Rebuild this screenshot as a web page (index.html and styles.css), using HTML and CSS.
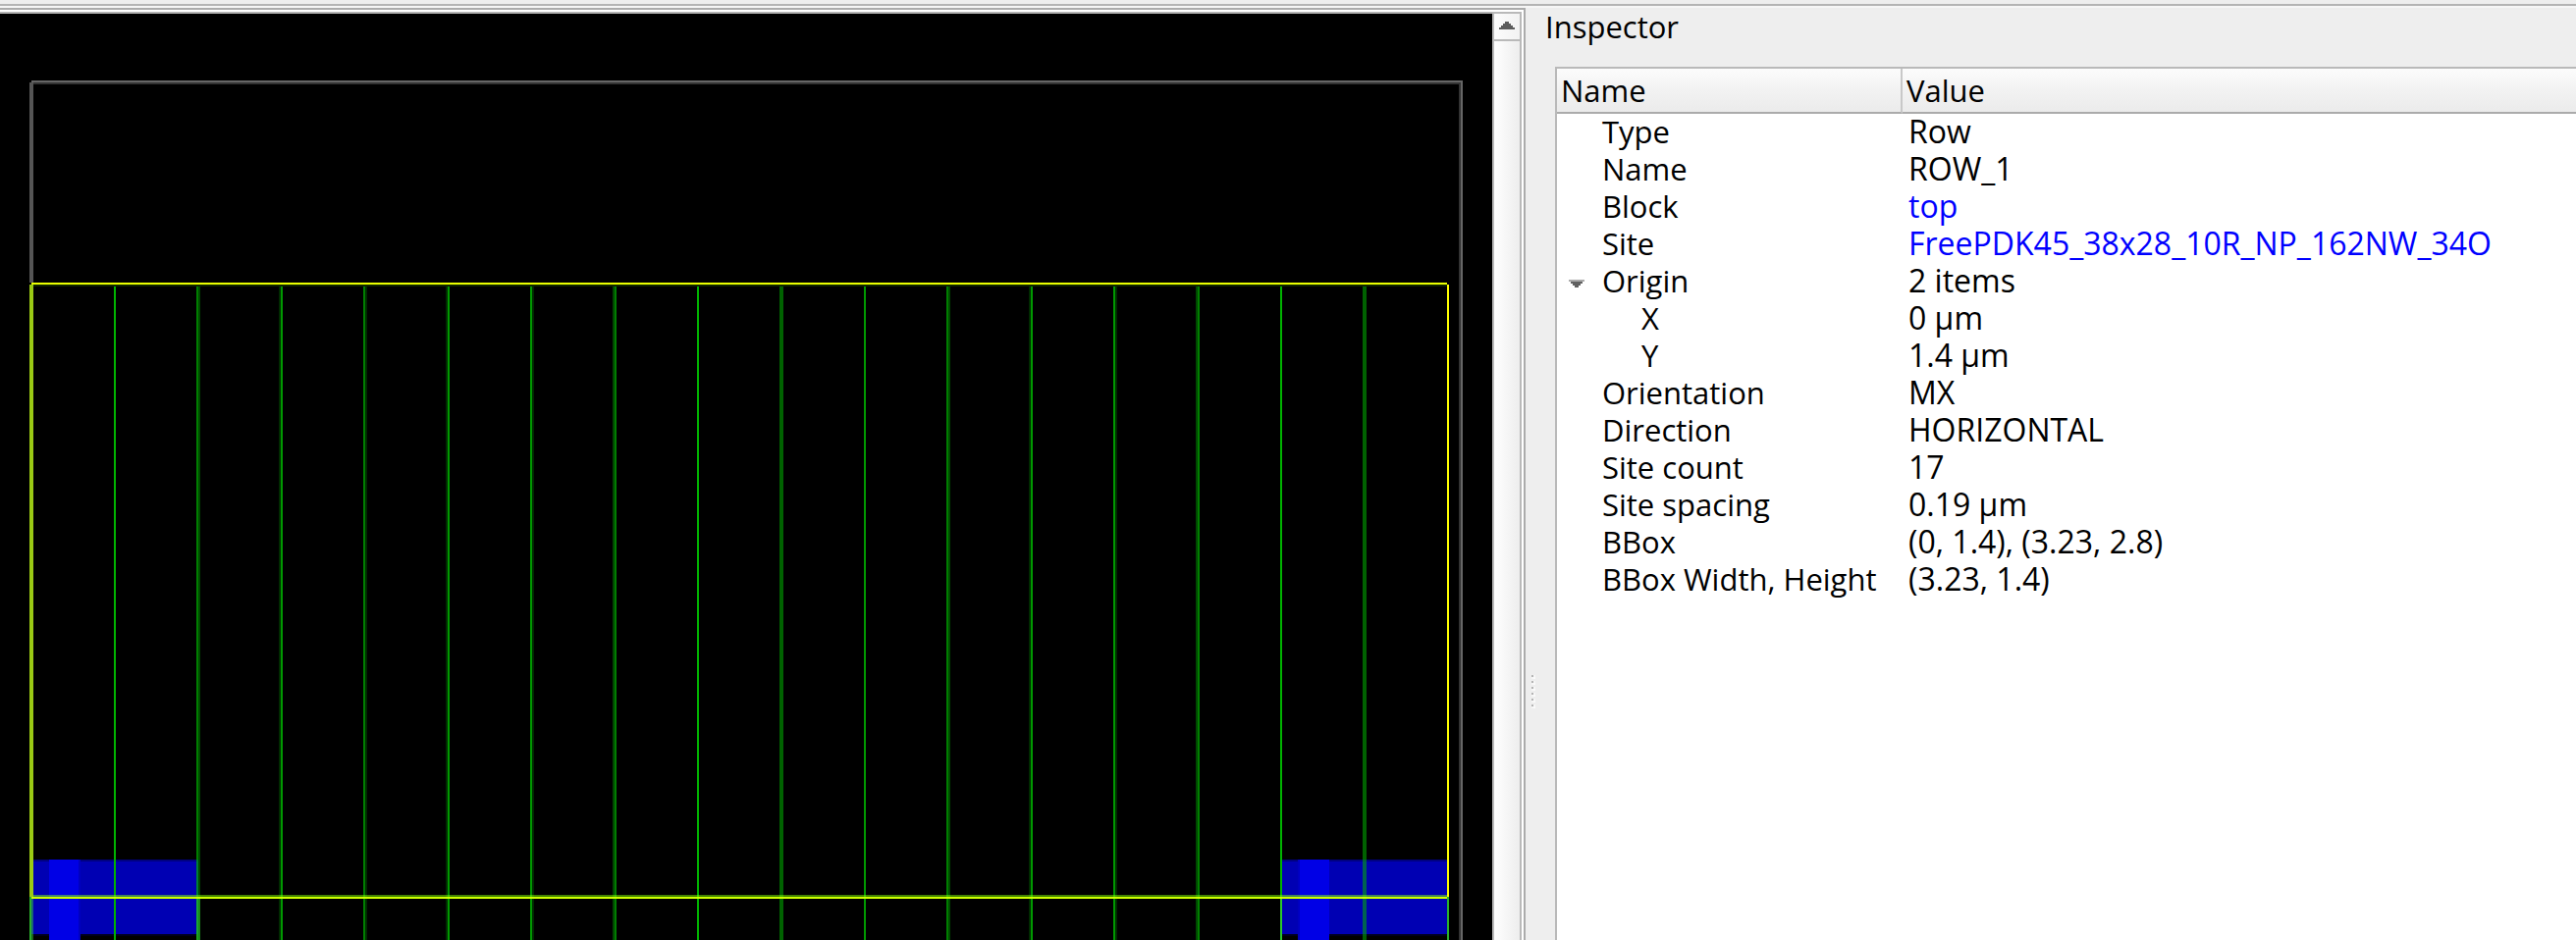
FILE: index.html
```
<!DOCTYPE html>
<html lang="en">
<head>
<meta charset="utf-8">
<title>Layout viewer</title>
<link rel="stylesheet" href="styles.css">
</head>
<body>
<div class="toolbar-edge"></div>
<main class="workspace">
  <section class="viewer" aria-label="Layout">
    <div class="canvas">
      <svg class="layout" viewBox="0 0 760 472" shape-rendering="crispEdges" role="img" aria-label="Row placement">
        <g transform="translate(0 -7)">
          <!-- die outline -->
          <path fill="#666" d="M16 41h728v1H16z"/>
          <path fill="#333" d="M16 42h727v1H16z"/>
          <path fill="#555" d="M15 42h2v102h-2z"/>
          <path fill="#333" d="M743 42h1v437h-1z"/>
          <path fill="#666" d="M744 41h1v438h-1z"/>
          <!-- metal shapes -->
          <path fill="#000080" d="M17 438h84v1H17zM653 438h84v1h-84z"/>
          <path fill="#0000b3" d="M16 439h85v37H16zM653 439h84v37h-84z"/>
          <path fill="#00001c" d="M17 476h84v1H17zM653 476h84v1h-84z"/>
          <path fill="#0000e6" d="M25 438h15v41H25zM662 438h15v41h-15z"/>
          <path fill="#0000c0" d="M40 438h1v41h-1zM661 438h1v41h-1z"/>
          <!-- site grid -->
          <g fill="#00b300">
            <path d="M58 145h1v334h-1zM355 145h1v334h-1zM652 145h1v334h-1z"/>
            <path opacity=".85" d="M143 145h1v334h-1zM228 145h1v334h-1zM270 145h1v334h-1zM440 145h1v334h-1zM525 145h1v334h-1zM567 145h1v334h-1z"/>
            <path opacity=".7" d="M100 145h1v334h-1zM185 145h1v334h-1zM313 145h1v334h-1zM482 145h1v334h-1zM610 145h1v334h-1z"/>
            <path opacity=".55" d="M397 145h1v334h-1zM398 145h1v334h-1zM695 145h1v334h-1zM694 145h1v334h-1z"/>
            <path opacity=".4" d="M101 145h1v334h-1zM312 145h1v334h-1zM483 145h1v334h-1zM609 145h1v334h-1z"/>
            <path opacity=".24" d="M142 145h1v334h-1zM186 145h1v334h-1zM227 145h1v334h-1zM271 145h1v334h-1zM524 145h1v334h-1zM568 145h1v334h-1z"/>
          </g>
          <path fill="#33cc33" opacity=".85" d="M15 457h1v22h-1zM652 457h1v22h-1zM737 457h1v22h-1z"/>
          <path fill="#33cc33" opacity=".5" d="M16 457h1v22h-1zM100 457h2v22h-2z"/>
          <!-- selected row -->
          <path fill="#9aca14" d="M15 145h2v312h-2z"/>
          <path fill="#0f2400" d="M17 145h720v1H17z"/>
          <path fill="#eaff00" d="M16 144h721v1H16z"/>
          <path fill="#ffff00" d="M737 145h1v312h-1z"/>
          <path fill="#80ff00" opacity=".5" d="M17 456h720v1H17z"/>
          <path fill="#ccff00" d="M16 457h721v1H16z"/>
        </g>
      </svg>
    </div>
    <div class="scrollbar">
      <button class="scroll-up" type="button" aria-label="Scroll up">
        <svg class="scroll-arrow" viewBox="0 0 16 8"><path fill="#5c5c5c" d="M0 8V6h2V4h2V2h2V0h4v2h2v2h2v2h2v2z"/></svg>
      </button>
    </div>
  </section>
  <section class="dock">
    <div class="grip"><i></i><i></i><i></i><i></i><i></i><i></i></div>
    <div class="inspector">
      <h1 class="title">Inspector</h1>
      <div class="tree">
        <table class="properties">
          <thead><tr><th class="name-col">Name</th><th>Value</th></tr></thead>
          <tbody>
            <tr><td>Type</td><td>Row</td></tr>
            <tr><td>Name</td><td>ROW_1</td></tr>
            <tr><td>Block</td><td><a href="#top">top</a></td></tr>
            <tr><td>Site</td><td><a href="#site">FreePDK45_38x28_10R_NP_162NW_34O</a></td></tr>
            <tr><td class="branch"><button class="toggle" type="button" aria-expanded="true" aria-label="Collapse Origin"><svg class="toggle-arrow" viewBox="0 0 16 10"><path fill="#aaa" d="M0 0h16v2H0z"/><path fill="#606060" d="M2 2h12v2h-2v2h-2v2H6V6H4V4H2z"/></svg></button>Origin</td><td>2 items</td></tr>
            <tr><td class="child">X</td><td>0 µm</td></tr>
            <tr><td class="child">Y</td><td>1.4 µm</td></tr>
            <tr><td>Orientation</td><td>MX</td></tr>
            <tr><td>Direction</td><td>HORIZONTAL</td></tr>
            <tr><td>Site count</td><td>17</td></tr>
            <tr><td>Site spacing</td><td>0.19 µm</td></tr>
            <tr><td>BBox</td><td>(0, 1.4), (3.23, 2.8)</td></tr>
            <tr><td>BBox Width, Height</td><td>(3.23, 1.4)</td></tr>
          </tbody>
        </table>
      </div>
    </div>
  </section>
</main>
</body>
</html>
```
FILE: styles.css
```
* { box-sizing: border-box; }

body {
  margin: 0;
  height: 100vh;
  display: flex;
  flex-direction: column;
  overflow: hidden;
  background: #eeeeee;
  color: #000;
  font: 31px/38px "Open Sans", "Noto Sans", sans-serif;
}

button {
  margin: 0;
  padding: 0;
  border: 0;
  background: none;
}

.toolbar-edge {
  flex: none;
  height: 8px;
  border-top: 4px solid #eeeeee;
  border-bottom: 2px solid #f6f6f6;
  background: #b4b4b4;
}

.workspace {
  flex: 1;
  min-height: 0;
  display: grid;
  grid-template-columns: minmax(0, 777fr) minmax(0, 535fr);
  grid-template-rows: minmax(0, 1fr);
}

.viewer {
  display: flex;
  overflow: hidden;
  border-top: 2px solid #ababab;
  border-right: 2px solid #ababab;
  background: #fff;
  padding: 2px 2px 0 0;
}

.canvas {
  flex: 1;
  min-width: 0;
  border-top: 2px solid #b4b4b4;
  background: #000;
  overflow: hidden;
}

.layout {
  display: block;
  width: 100%;
}

.scrollbar {
  flex: none;
  width: 30px;
  border: 2px solid #b9b9b9;
  border-bottom: 0;
  background: linear-gradient(90deg, #fff, #ededed);
}

.scroll-up {
  display: flex;
  width: 100%;
  height: 28px;
  justify-content: center;
  padding-top: 8px;
  border-bottom: 2px solid #b9b9b9;
  background: linear-gradient(90deg, #fcfcfc, #f2f2f2);
}

.scroll-arrow {
  width: 16px;
  height: 8px;
}

.dock {
  display: flex;
}

.grip {
  flex: none;
  width: 20px;
  padding: 680px 0 0 6px;
  display: flex;
  flex-direction: column;
  gap: 4px;
}

.grip i {
  flex: none;
  width: 2px;
  height: 2px;
  background: #b4b4b4;
  box-shadow: 2px 2px 0 #fafafa, 2px 0 0 #f6f6f6, 0 2px 0 #f6f6f6;
}

.inspector {
  flex: 1;
  min-width: 0;
  display: flex;
  flex-direction: column;
}

.title {
  margin: 0;
  padding-bottom: 22px;
  font-size: 31px;
  font-weight: 400;
}

.tree {
  flex: 1;
  min-height: 0;
  margin-left: 10px;
  border: 2px solid #b9b9b9;
  border-width: 2px 0 0 2px;
  background: #fff;
}

.properties {
  width: 100%;
  table-layout: fixed;
  border-collapse: separate;
  border-spacing: 0;
  white-space: nowrap;
}

.properties th {
  height: 46px;
  padding: 0 4px;
  border-bottom: 2px solid #ababab;
  background: linear-gradient(#fcfcfc, #f2f2f2 50%, #ebebeb);
  font-weight: 400;
  text-align: left;
}

.properties .name-col {
  width: 352px;
  border-right: 2px solid #c8c8c8;
}

.properties td {
  height: 38px;
  padding: 0 0 2px 6px;
  font-size: 32px;
  line-height: 36px;
}

.properties td:first-child {
  padding-left: 46px;
  font-size: 31px;
}

.properties td.child:first-child { padding-left: 86px; }

.properties td.branch:first-child { padding-left: 12px; }

.toggle {
  width: 34px;
  height: 10px;
  display: inline-flex;
  vertical-align: middle;
}

.toggle-arrow {
  width: 16px;
  height: 10px;
}

.properties a {
  color: #0000ff;
  text-decoration: none;
}
```
